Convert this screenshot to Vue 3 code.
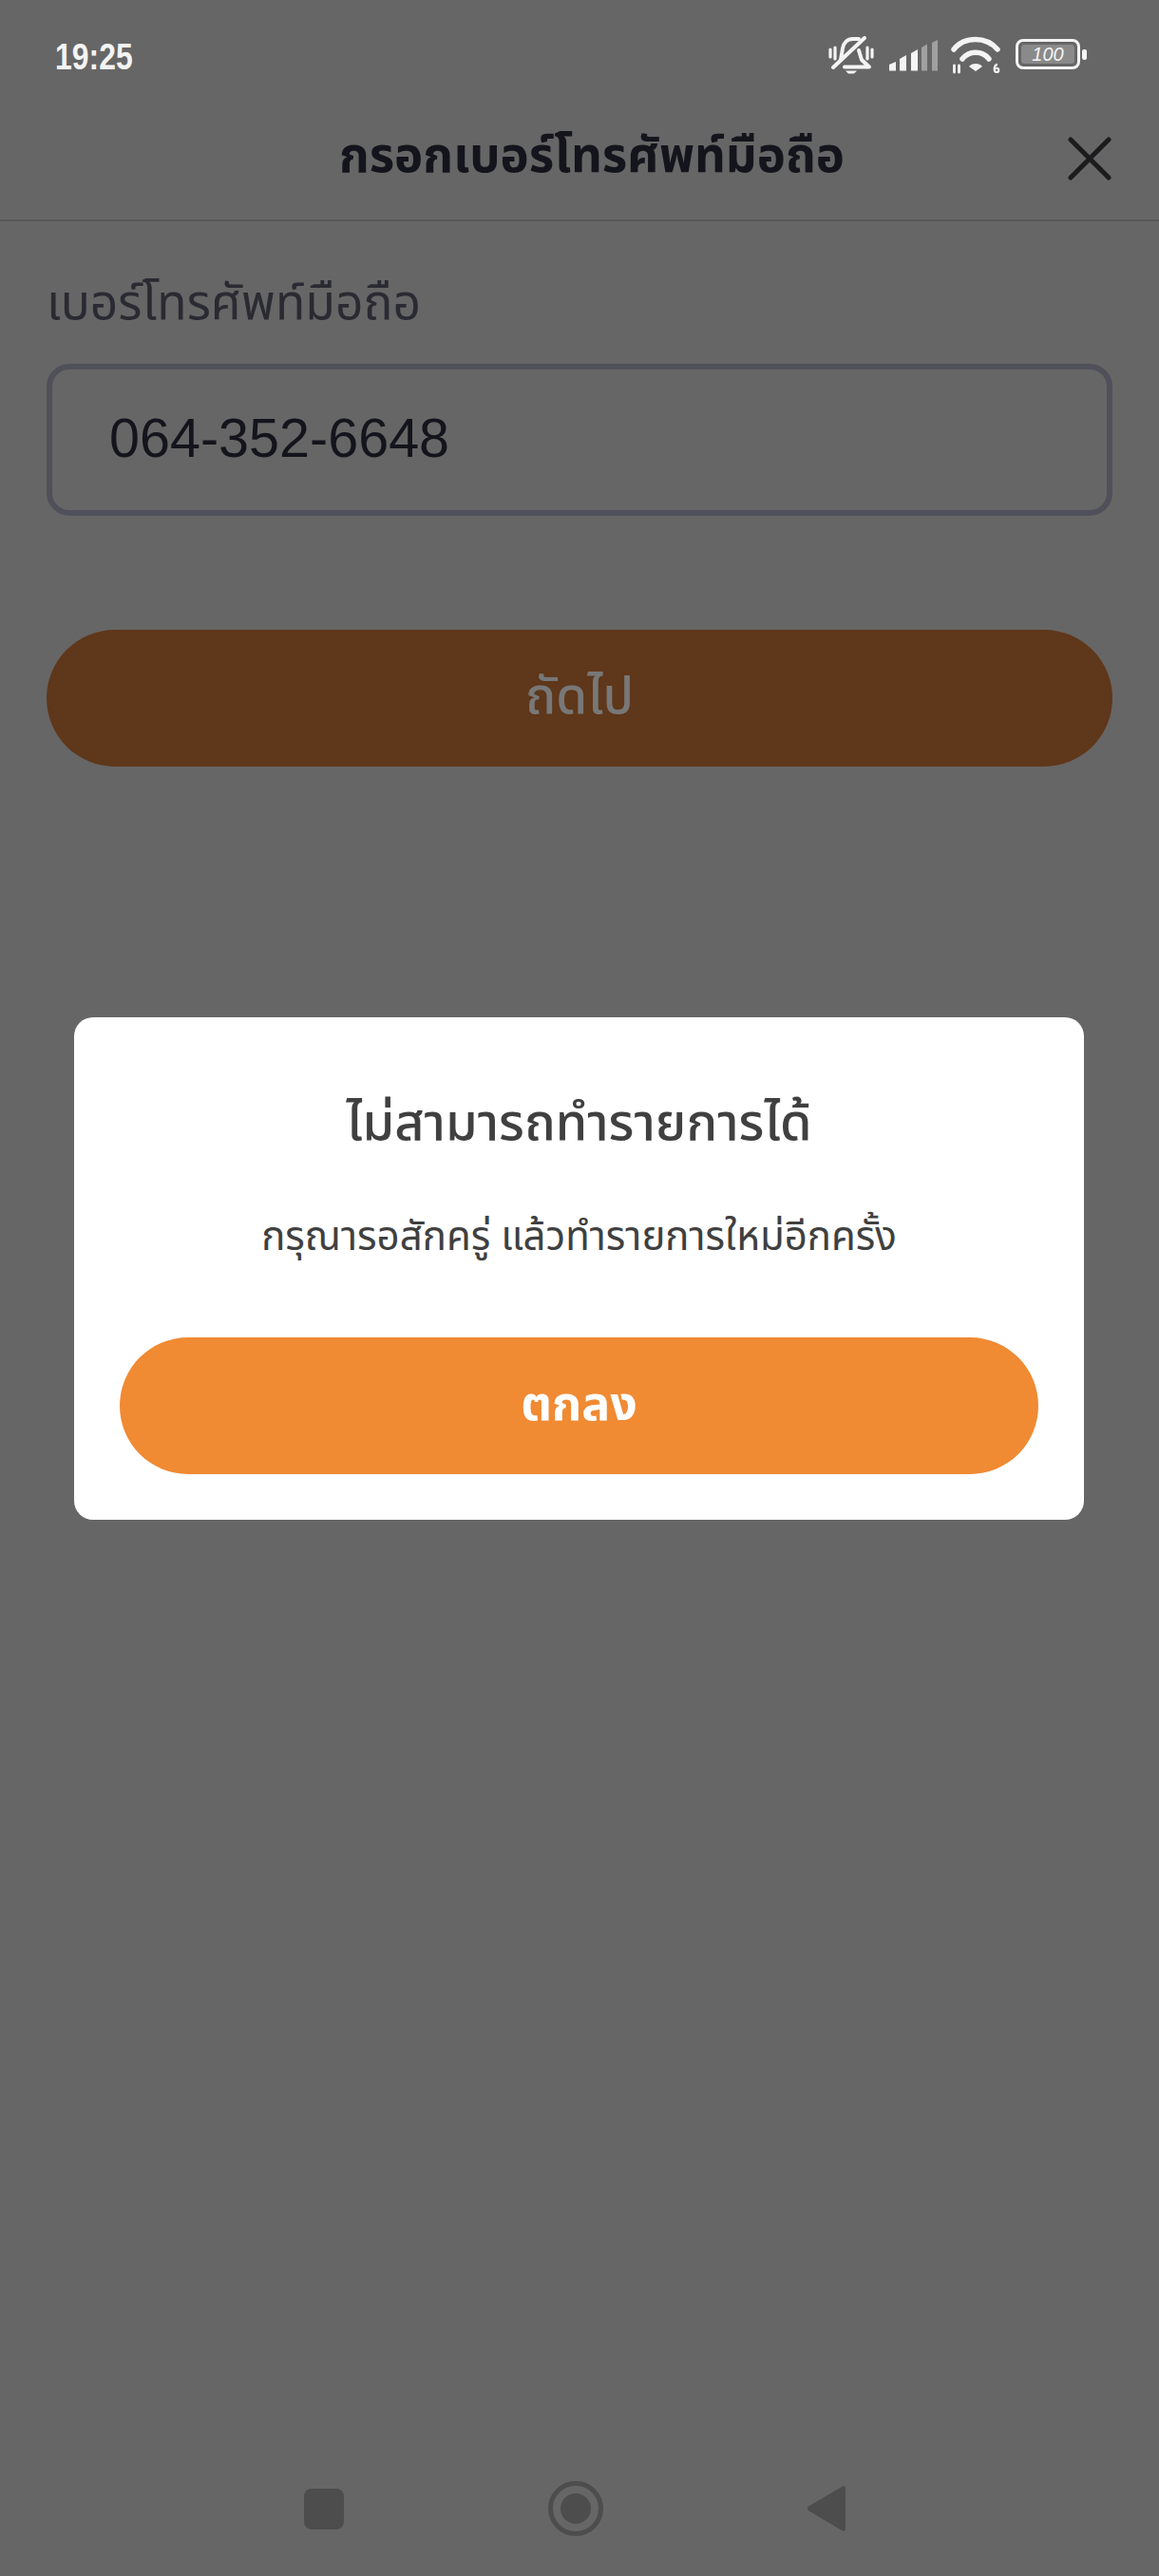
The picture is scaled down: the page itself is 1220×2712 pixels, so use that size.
<script setup>
const title = 'กรอกเบอร์โทรศัพท์มือถือ'
const phone = '064-352-6648'
</script>

<template>
  <div class="page">
    <div class="statusBar">
      <span class="time">19:25</span>
      <div class="statusIcons">
        <svg width="48" height="40" viewBox="0 0 48 40" fill="none" stroke="#f4f4f4" stroke-linecap="round" stroke-linejoin="round">
          <path d="M2 14v8M7 12v12M41 12v12M46 14v8" stroke-width="3.200" />
          <path d="M13 25l2-12C16 7 20 3 26 3h6" stroke-width="4" />
          <path d="M32 15l3 10 8 7.500H17" stroke-width="4" />
          <path d="M5 33L38 2" stroke-width="4" />
          <path d="M18 36.500h12l-3 3h-6z" fill="#f4f4f4" stroke="none" />
        </svg>
        <svg class="signal" width="51" height="33" viewBox="0 0 51 33">
          <path d="M0 26l7-3v9.500H0z" fill="#f4f4f4" />
          <path d="M11 20l7-4v16.500h-7z" fill="#f4f4f4" />
          <path d="M23 14l7-4v22.500h-7z" fill="#f4f4f4" />
          <path d="M34 8l6-3.500v28h-6z" fill="#a0a0a0" />
          <path d="M45 3l6-3v32.500h-6z" fill="#a0a0a0" />
        </svg>
        <svg class="wifi" width="52" height="40" viewBox="0 0 52 40" fill="none" stroke="#f4f4f4" stroke-linecap="round">
          <path d="M3 14C14 0 37 0 49 14" stroke-width="5.500" />
          <path d="M12 24c7-9 21-9 28 0" stroke-width="5.500" />
          <path d="M19 32c3-4 11-4 14 0l-7 5z" fill="#f4f4f4" stroke="none" />
          <path d="M3.500 38v-7M8.500 31v7" stroke-width="2.800" />
          <path d="M48 30c-3 2-3 8 0 8s3-5 0-4" stroke-width="2.200" />
        </svg>
        <div class="battery">
          <div class="batteryBody"><span class="batteryFill">100</span></div>
          <span class="batteryNub"></span>
        </div>
      </div>
    </div>

    <header class="header">
      <h1 class="title">{{ title }}</h1>
      <svg class="closeIcon" width="46" height="46" viewBox="0 0 46 46" fill="none" stroke="#1c1c1e" stroke-width="5" stroke-linecap="round">
        <path d="M3 3l40 40M43 3L3 43" />
      </svg>
    </header>

    <main class="form">
      <div class="fieldLabel">เบอร์โทรศัพท์มือถือ</div>
      <div class="field">{{ phone }}</div>
      <div class="nextBtn">ถัดไป</div>
    </main>

    <nav class="navBar">
      <span class="navSquare"></span>
      <svg width="58" height="58" viewBox="0 0 58 58">
        <circle cx="29" cy="29" r="26.500" fill="none" stroke="#4d4d4d" stroke-width="5" />
        <circle cx="29" cy="29" r="16" fill="#4d4d4d" />
      </svg>
      <svg width="40" height="48" viewBox="0 0 40 48">
        <path d="M37 .5L1.500 21.500c-2 1.200-2 3.800 0 5L37 47.500c1.500 .5 3-.5 3-2V2.500c0-1.500-1.500-2.500-3-2z" fill="#4d4d4d" />
      </svg>
    </nav>

    <div class="dialog">
      <div class="dialogTitle">ไม่สามารถทำรายการได้</div>
      <div class="dialogText">กรุณารอสักครู่ แล้วทำรายการใหม่อีกครั้ง</div>
      <div class="okBtn">ตกลง</div>
    </div>
  </div>
</template>

<style scoped>
  .page {
    position: relative;
    display: flex;
    flex-direction: column;
    height: 2712px;
    background-color: #666666;
    font-family: "Noto Sans Thai", "Noto Sans", "Liberation Sans", sans-serif;
    overflow: hidden;
  }

  .statusBar {
    display: flex;
    justify-content: space-between;
    height: 100px;
    padding: 38px 76px 0 58px;
    box-sizing: border-box;
  }

  .time {
    font-family: "Liberation Sans", sans-serif;
    font-size: 38px;
    font-weight: 700;
    line-height: 44px;
    color: #f4f4f4;
    transform: scaleX(0.84);
    transform-origin: left center;
  }

  .statusIcons {
    display: flex;
    align-items: flex-start;
    gap: 16px;
  }

  .signal {
    margin-top: 4px;
  }

  .wifi {
    margin-left: -2px;
  }

  .battery {
    display: flex;
    align-items: center;
    gap: 2px;
    margin-top: 3px;
  }

  .batteryBody {
    width: 68px;
    height: 32px;
    padding: 3px;
    box-sizing: border-box;
    border: 3px solid #f4f4f4;
    border-radius: 8px;
  }

  .batteryFill {
    display: block;
    height: 100%;
    border-radius: 3px;
    background-color: #8a8a8a;
    color: #f4f4f4;
    font-family: "Liberation Sans", sans-serif;
    font-size: 20px;
    font-style: italic;
    line-height: 20px;
    text-align: center;
  }

  .batteryNub {
    width: 5px;
    height: 11px;
    border-radius: 2px;
    background-color: #f4f4f4;
  }

  .header {
    position: relative;
    display: flex;
    align-items: center;
    justify-content: center;
    height: 133px;
    padding-left: 26px;
    box-sizing: border-box;
    border-bottom: 2px solid #585858;
  }

  .title {
    margin: 0;
    font-size: 51px;
    font-weight: 700;
    color: #14141c;
  }

  .closeIcon {
    position: absolute;
    right: 50px;
    top: 44px;
  }

  .form {
    display: flex;
    flex-direction: column;
    padding: 0 49px;
  }

  .fieldLabel {
    margin-top: 54px;
    font-size: 51.500px;
    line-height: 66px;
    color: #2a2a32;
  }

  .field {
    display: flex;
    align-items: center;
    height: 160px;
    margin-top: 30px;
    padding: 0 0 4px 60px;
    box-sizing: border-box;
    border: 6px solid #50505a;
    border-radius: 24px;
    font-family: "Liberation Sans", sans-serif;
    font-size: 57.500px;
    color: #14141c;
  }

  .nextBtn {
    display: flex;
    align-items: center;
    justify-content: center;
    height: 144px;
    margin-top: 120px;
    border-radius: 72px;
    background-color: #5f371a;
    font-size: 53px;
    font-weight: 500;
    color: #787878;
  }

  .navBar {
    display: flex;
    align-items: center;
    justify-content: space-between;
    width: 570px;
    margin: auto 0 42px 320px;
  }

  .navSquare {
    width: 42px;
    height: 43px;
    border-radius: 8px;
    background-color: #4d4d4d;
  }

  .dialog {
    position: absolute;
    top: 1071px;
    left: 78px;
    width: 1063px;
    height: 529px;
    padding: 0 48px;
    box-sizing: border-box;
    border-radius: 20px;
    background-color: #ffffff;
    text-align: center;
  }

  .dialogTitle {
    margin-top: 73px;
    font-size: 54px;
    font-weight: 500;
    line-height: 80px;
    color: #404040;
  }

  .dialogText {
    margin-top: 49px;
    font-size: 42px;
    line-height: 60px;
    color: #404040;
  }

  .okBtn {
    display: flex;
    align-items: center;
    justify-content: center;
    height: 144px;
    margin-top: 75px;
    border-radius: 72px;
    background-color: #f08a33;
    font-size: 50px;
    font-weight: 700;
    color: #ffffff;
  }
</style>

<style>
  body {
    background-color: #666666;
  }
</style>
